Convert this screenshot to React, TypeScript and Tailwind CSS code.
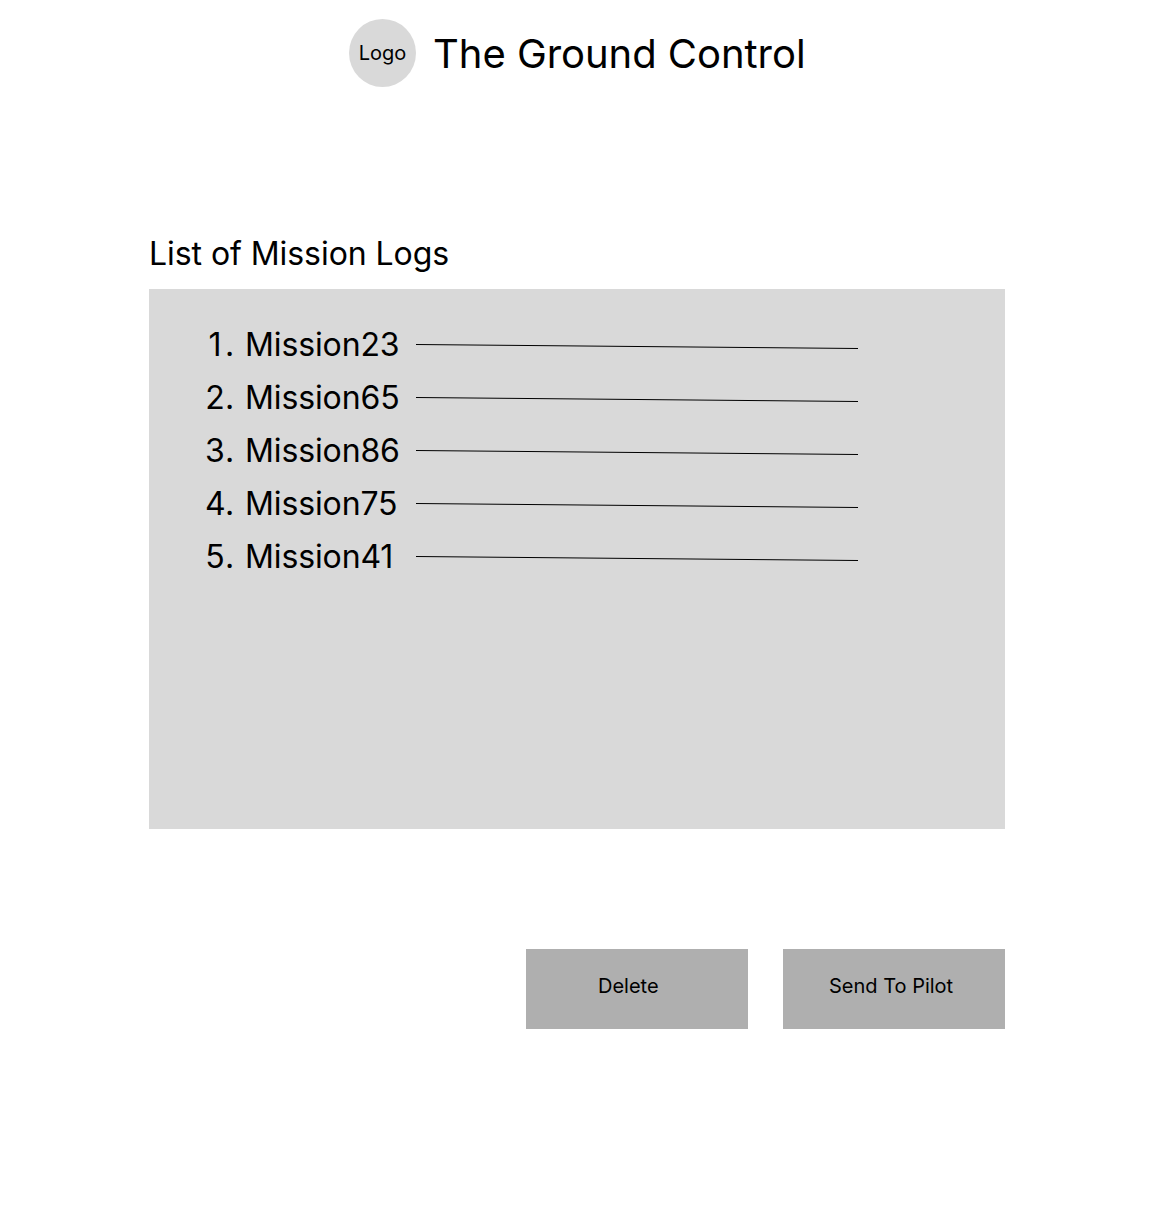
const missions = ["Mission23", "Mission65", "Mission86", "Mission75", "Mission41"];

export default function App() {
  return (
    <div className="flex min-h-screen w-[1153px] flex-col bg-white font-['Inter',sans-serif] text-black">
      <header className="flex items-center pt-[19px] pl-[349px]">
        <div className="flex h-[68px] w-[67px] items-center justify-center rounded-[50%] bg-[#d9d9d9] text-[20px] leading-6">
          Logo
        </div>
        <h1 className="ml-[17px] pt-0.5 text-[40px] leading-[48px] tracking-[-0.04px] whitespace-nowrap">The Ground Control</h1>
      </header>
      <main className="ml-[149px] w-[856px] pt-[147px]">
        <h2 className="text-[32px] leading-[39px] tracking-[-0.06px]">List of Mission Logs</h2>
        <ol className="mt-4 flex h-[540px] flex-col gap-[14px] bg-[#d9d9d9] pt-9 pl-[56px]">
          {missions.map((name, i) => (
            <li key={name} className="flex h-[39px] items-center text-[32px] leading-[39px]">
              <span className="flex w-[40px]">
                <span className="w-5 text-center">{i + 1}</span>.
              </span>
              <span className="w-[171px] tracking-[-0.12px]">{name}</span>
              <svg className="mt-1 h-[6px] w-[442px]" viewBox="0 0 442 6" fill="none">
                <path d="M0 .5L442 4.5" stroke="black" />
              </svg>
            </li>
          ))}
        </ol>
        <div className="mt-[120px] flex justify-end gap-[35px] text-[20px] leading-6">
          <button className="flex h-20 w-[222px] items-start bg-[#afafaf] pt-[25px] pl-[72px]">Delete</button>
          <button className="flex h-20 w-[222px] items-start bg-[#afafaf] pt-[25px] pl-[46px]">Send To Pilot</button>
        </div>
      </main>
    </div>
  );
}
